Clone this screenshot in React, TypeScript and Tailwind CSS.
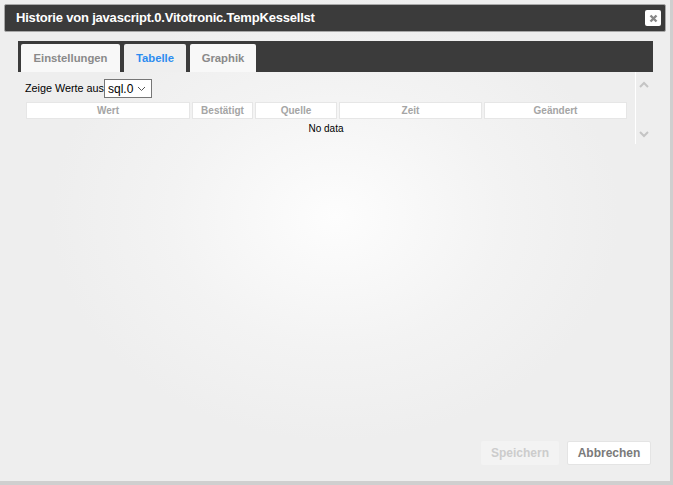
import React from "react";

function Chevron({ up }: { up?: boolean }) {
  return (
    <svg width="10" height="7" viewBox="0 0 10 7">
      <path d={up ? "M1 6 L5 2 L9 6" : "M1 1 L5 5 L9 1"} fill="none" stroke="#c4c4c4" strokeWidth="2" />
    </svg>
  );
}

export default function App() {
  const cols = [
    { t: "Wert", w: "w-[164px]" },
    { t: "Bestätigt", w: "w-[61px]" },
    { t: "Quelle", w: "w-[82px]" },
    { t: "Zeit", w: "w-[143px]" },
    { t: "Geändert", w: "w-[143px]" },
  ];
  return (
    <div className="w-[673px] h-[485px] bg-[#cfcfcf] overflow-hidden" style={{ fontFamily: '"Liberation Sans", Arial, sans-serif' }}>
      <div className="w-[670px] h-[481px] flex flex-col bg-[#eeeeee] bg-[radial-gradient(ellipse_at_50%_45%,#fdfdfd_0%,#f3f3f3_35%,#eeeeee_60%)]">
        <div className="mx-[4px] mt-[4px] h-[28px] bg-[#3b3b3b] border border-[#a8a8a8] rounded-[2px] flex items-center justify-between pl-[11px] pr-[4px]">
          <span className="text-white font-bold text-[13px] tracking-[-0.2px]">Historie von javascript.0.Vitotronic.TempKessellst</span>
          <div className="w-[16px] h-[16px] bg-white rounded-[2px] flex items-center justify-center">
            <svg width="9" height="9" viewBox="0 0 9 9">
              <path d="M1.5 1.5 L7.5 7.5 M7.5 1.5 L1.5 7.5" stroke="#888" strokeWidth="2.4" />
            </svg>
          </div>
        </div>
        <div className="ml-[18px] mt-[9px] w-[635px] flex flex-col">
          <div className="h-[31px] bg-[#3b3b3b] flex items-end pl-[3px] gap-[4px]">
            <div className="h-[28px] w-[99px] bg-[#f8f8f8] rounded-t-[2px] flex items-center justify-center text-[11.3px] font-bold text-[#8a8a8a]">Einstellungen</div>
            <div className="h-[28px] w-[62px] bg-[#efefef] rounded-t-[2px] flex items-center justify-center text-[11.3px] font-bold text-[#2c8cf0]">Tabelle</div>
            <div className="h-[28px] w-[66px] bg-[#f8f8f8] rounded-t-[2px] flex items-center justify-center text-[11.3px] font-bold text-[#8a8a8a]">Graphik</div>
          </div>
          <div className="flex h-[72px]">
            <div className="w-[618px] border-r border-white flex flex-col pl-[7px]">
              <div className="mt-[7px] flex items-center text-black h-[19px]">
                <span className="text-[10.8px]">Zeige Werte aus</span>
                <div className="w-[48px] h-[19px] border border-[#767676] bg-white flex items-center justify-between pl-[3px] pr-[5px]">
                  <span className="text-[12px]">sql.0</span>
                  <svg width="9" height="6" viewBox="0 0 9 6"><path d="M1 1 L4.5 4.5 L8 1" fill="none" stroke="#555" strokeWidth="1" /></svg>
                </div>
              </div>
              <div className="mt-[4px] ml-[1px] flex gap-[2px]">
                {cols.map((c) => (
                  <div key={c.t} className={`${c.w} h-[17px] bg-white border border-[#e6e6e6] flex items-center justify-center text-[10px] font-bold text-[#a5a5a5]`}>{c.t}</div>
                ))}
              </div>
              <div className="mt-[2px] text-[10px] text-black text-center w-[602px]">No data</div>
            </div>
            <div className="w-[16px] flex flex-col items-center justify-between pt-[9px] pb-[6px]">
              <Chevron up />
              <Chevron />
            </div>
          </div>
        </div>
        <div className="flex-1" />
        <div className="flex justify-end gap-[8px] pr-[19px] pb-[16px]">
          <div className="w-[78px] h-[24px] bg-[#f3f3f3] rounded-[2px] flex items-center justify-center text-[12px] font-bold text-[#cccccc]">Speichern</div>
          <div className="w-[84px] h-[24px] bg-white border border-[#e4e4e4] rounded-[2px] flex items-center justify-center text-[12px] font-bold text-[#7a7a7a]">Abbrechen</div>
        </div>
      </div>
    </div>
  );
}
